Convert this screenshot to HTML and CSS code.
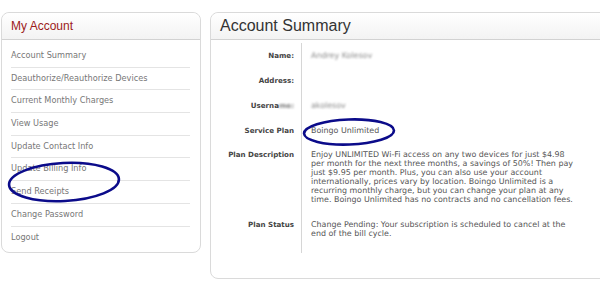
FILE: index.html
```html
<!DOCTYPE html>
<html lang="en">
<head>
    <meta charset="UTF-8">
    <title>My Account - Account Summary</title>
    <link rel="stylesheet" href="styles.css">
</head>
<body>
    <div class="page">
        <div class="side-panel">
            <div class="panel-header">
                <h2 class="side-title">My Account</h2>
            </div>
            <ul class="side-menu">
                <li>Account Summary</li>
                <li>Deauthorize/Reauthorize Devices</li>
                <li>Current Monthly Charges</li>
                <li>View Usage</li>
                <li>Update Contact Info</li>
                <li>Update Billing Info</li>
                <li>Send Receipts</li>
                <li>Change Password</li>
                <li class="last">Logout</li>
            </ul>
        </div>

        <div class="main-panel">
            <div class="panel-header">
                <h1 class="main-title">Account Summary</h1>
            </div>
            <div class="summary">
                <div class="labels">
                    <div class="label row-name">Name:</div>
                    <div class="label row-address">Address:</div>
                    <div class="label row-user">Userna<span class="blur">me:</span></div>
                    <div class="label row-plan">Service Plan</div>
                    <div class="label row-desc">Plan Description</div>
                    <div class="label row-status">Plan Status</div>
                </div>
                <div class="values">
                    <div class="value row-name"><span class="blur">Andrey Kolesov</span></div>
                    <div class="value row-address">&nbsp;</div>
                    <div class="value row-user"><span class="blur">akolesov</span></div>
                    <div class="value row-plan">Boingo Unlimited</div>
                    <div class="value row-desc">Enjoy UNLIMITED Wi-Fi access on any two devices for just $4.98 per month for the next three months, a savings of 50%! Then pay just $9.95 per month. Plus, you can also use your account internationally, prices vary by location. Boingo Unlimited is a recurring monthly charge, but you can change your plan at any time. Boingo Unlimited has no contracts and no cancellation fees.</div>
                    <div class="value row-status">Change Pending: Your subscription is scheduled to cancel at the end of the bill cycle.</div>
                </div>
            </div>
        </div>
    </div>

    <!-- hand drawn marks on the screenshot -->
    <svg class="marks" width="600" height="302" viewBox="0 0 600 302">
        <ellipse cx="64" cy="182" rx="55" ry="19" transform="rotate(-3 64 182)" />
        <ellipse cx="349" cy="132" rx="45" ry="12.5" transform="rotate(-2 349 132)" />
    </svg>
</body>
</html>
```

FILE: styles.css
```css
body {
    margin: 0;
    padding: 0;
    background: #fff;
    font-family: "DejaVu Sans", Verdana, sans-serif;
    overflow: hidden;
    width: 600px;
    height: 302px;
    position: relative;
}

.page {
    display: flex;
    align-items: flex-start;
    gap: 9px;
    padding: 12px 0 0 1px;
}

.side-panel,
.main-panel {
    border: 1px solid #dadada;
    border-radius: 8px;
    background: #fff;
    box-sizing: border-box;
}

.side-panel {
    width: 200px;
    height: 241px;
    flex-shrink: 0;
}

.main-panel {
    width: 420px;
    height: 267px;
    flex-shrink: 0;
}

.panel-header {
    height: 26px;
    border-bottom: 1px solid #d2d2d2;
    border-radius: 8px 8px 0 0;
    background: linear-gradient(to bottom, #ffffff 0%, #f3f3f3 100%);
    display: flex;
    align-items: center;
    padding-left: 9px;
}

.side-title {
    margin: 0;
    font-family: "Liberation Sans", Arial, sans-serif;
    font-weight: normal;
    font-size: 12px;
    color: #9c1b1b;
}

.main-title {
    margin: 0;
    font-family: "Liberation Sans", Arial, sans-serif;
    font-weight: normal;
    font-size: 16px;
    color: #333;
}

.side-menu {
    list-style: none;
    margin: 0;
    padding: 5px 10px 0 9px;
}

.side-menu li {
    height: 21.7px;
    line-height: 21.7px;
    border-bottom: 1px solid #e4e4e4;
    font-size: 8.2px;
    color: #777;
}

.side-menu li.last {
    border-bottom: none;
}

.summary {
    display: flex;
    padding-top: 3px;
}

.labels {
    width: 90px;
    text-align: right;
    padding-right: 7px;
    box-sizing: border-box;
}

.values {
    border-left: 1px solid #d6d6d6;
    padding-left: 9px;
    width: 268px;
    height: 210px;
}

.label {
    font-weight: bold;
    font-size: 7.1px;
    color: #444;
}

.value {
    font-size: 7.95px;
    color: #555;
}

.label,
.value {
    line-height: 9px;
}

.row-name,
.row-address,
.row-user,
.row-plan {
    padding-top: 8px;
    height: 17px;
}

.row-desc {
    padding-top: 7px;
    height: 62px;
}

.row-status {
    padding-top: 8px;
}

.blur {
    filter: blur(1.2px);
    opacity: 0.7;
}

.marks {
    position: absolute;
    left: 0;
    top: 0;
    pointer-events: none;
}

.marks ellipse {
    fill: none;
    stroke: #0b0b8a;
    stroke-width: 2.6;
}
```
